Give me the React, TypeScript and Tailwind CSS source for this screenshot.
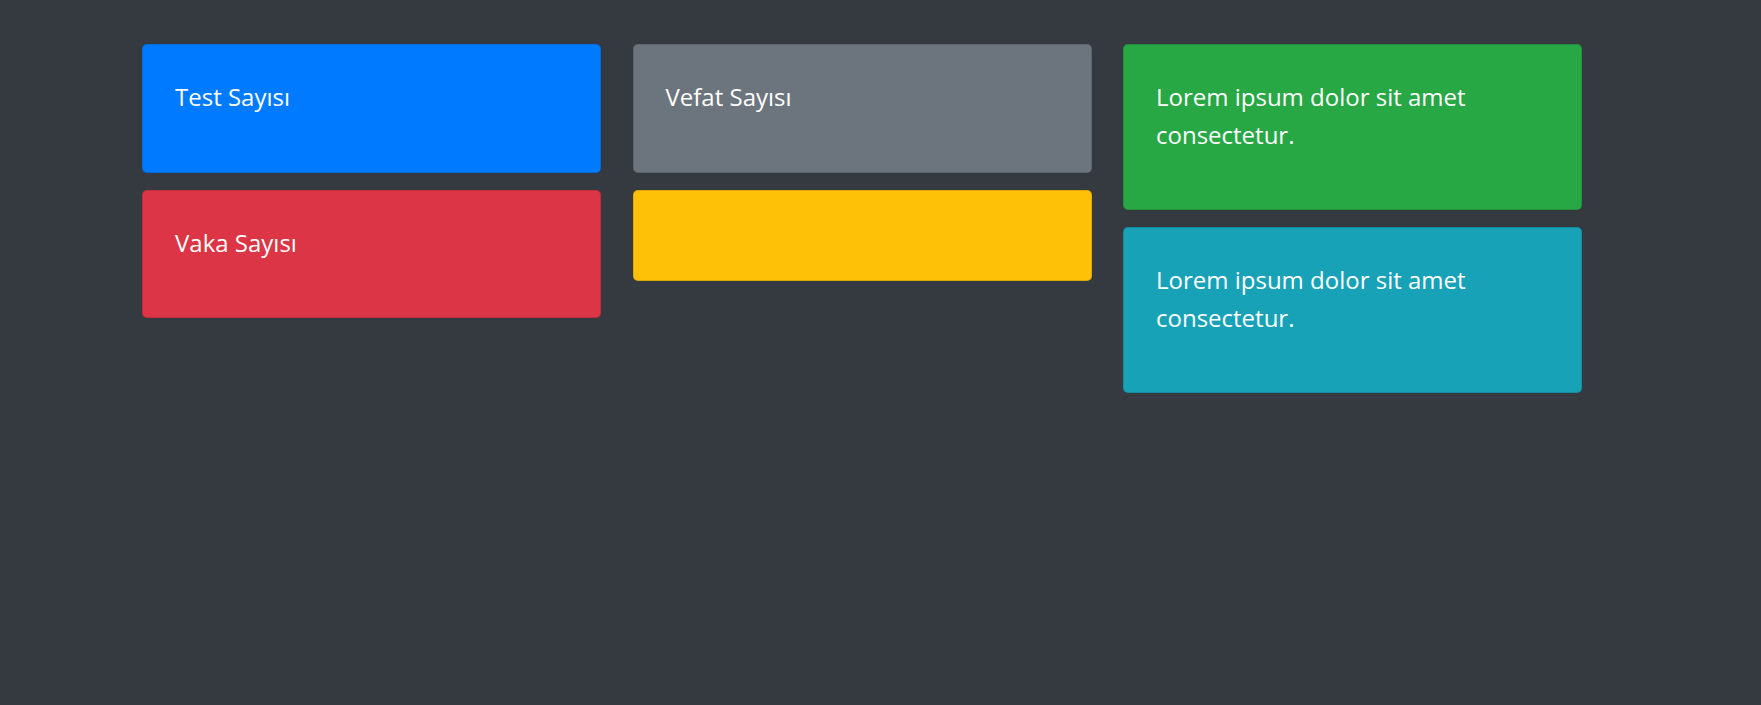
import React from "react";

const cardBase =
  "rounded-[5px] border border-black/[0.125] text-white px-[32px] pt-[33px] pb-[56px] text-[24px] leading-[37.5px]";

function Card({ color, text, h }: { color: string; text?: string; h?: string }) {
  return (
    <div className={`${cardBase} ${color} ${h ?? ""}`}>
      {text ? <p>{text}</p> : null}
    </div>
  );
}

export default function App() {
  return (
    <div
      className="min-h-screen w-full bg-[#343a40]"
      style={{ fontFamily: '"Open Sans", "Noto Sans", sans-serif' }}
    >
      <div className="flex items-start gap-x-[31.5px] pl-[142px] pt-[44px]">
        <div className="flex w-[459px] flex-col gap-[17px]">
          <Card color="bg-[#007bff]" text="Test Sayısı" />
          <Card color="bg-[#dc3545]" text="Vaka Sayısı" />
        </div>
        <div className="flex w-[459px] flex-col gap-[17px]">
          <Card color="bg-[#6c757d]" text="Vefat Sayısı" />
          <Card color="bg-[#ffc107]" h="h-[90px]" />
        </div>
        <div className="flex w-[459px] flex-col gap-[17px]">
          <Card color="bg-[#28a745]" text="Lorem ipsum dolor sit amet consectetur." />
          <Card color="bg-[#17a2b8]" text="Lorem ipsum dolor sit amet consectetur." />
        </div>
      </div>
    </div>
  );
}
